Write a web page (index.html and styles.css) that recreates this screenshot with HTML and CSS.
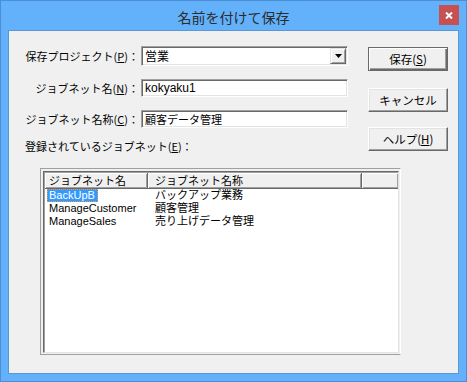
FILE: index.html
```html
<!DOCTYPE html>
<html>
<head>
    <meta charset="utf-8" />
    <title>名前を付けて保存</title>
    <link rel="stylesheet" href="styles.css">
</head>
<body>
    <div class="window">
        <!-- タイトルバー -->
        <div class="titlebar">
            <span class="title">名前を付けて保存</span>
            <div class="close">
                <svg width="8" height="7" viewBox="0 0 8 7"><path d="M1 0.5 L7 6.5 M7 0.5 L1 6.5" stroke="#fff" stroke-width="2"/></svg>
            </div>
        </div>
        <div class="client">
            <div class="top">
                <!-- 入力欄 -->
                <div class="form">
                    <div class="row r1">
                        <label>保存プロジェクト(<u>P</u>)：</label>
                        <div class="combo">
                            <span class="val">営業</span>
                            <span class="drop"><svg width="7" height="4" viewBox="0 0 7 4"><path d="M0 0 H7 L3.5 4 Z" fill="#000"/></svg></span>
                        </div>
                    </div>
                    <div class="row r2">
                        <label>ジョブネット名(<u>N</u>)：</label>
                        <div class="field"><span class="en">kokyaku1</span></div>
                    </div>
                    <div class="row r3">
                        <label>ジョブネット名称(<u>C</u>)：</label>
                        <div class="field">顧客データ管理</div>
                    </div>
                    <div class="row r4">
                        <label class="plain">登録されているジョブネット(<u>E</u>)：</label>
                    </div>
                </div>
                <!-- ボタン -->
                <div class="buttons">
                    <div class="btn default">保存(<u>S</u>)</div>
                    <div class="btn b2">キャンセル</div>
                    <div class="btn b3">ヘルプ(<u>H</u>)</div>
                </div>
            </div>
            <!-- 一覧 -->
            <div class="listframe">
                <div class="listview">
                    <div class="header">
                        <div class="hcell c1">ジョブネット名</div>
                        <div class="hcell c2">ジョブネット名称</div>
                        <div class="hcell c3"></div>
                    </div>
                    <div class="lrow">
                        <div class="cell c1"><span class="sel">BackUpB</span></div>
                        <div class="cell c2">バックアップ業務</div>
                    </div>
                    <div class="lrow">
                        <div class="cell c1"><span class="txt">ManageCustomer</span></div>
                        <div class="cell c2">顧客管理</div>
                    </div>
                    <div class="lrow">
                        <div class="cell c1"><span class="txt">ManageSales</span></div>
                        <div class="cell c2">売り上げデータ管理</div>
                    </div>
                </div>
            </div>
        </div>
    </div>
</body>
</html>
```

FILE: styles.css
```css
/*清除边距*/
body{
    margin: 0;
    font-family: "Noto Sans CJK JP", sans-serif;
    font-size: 11px;
    color: #000;
}
/*ウィンドウ枠*/
.window{
    width: 467px;
    height: 382px;
    box-sizing: border-box;
    border: 1px solid #4c8fd6;
    background: #63b1fb;
    padding: 0 7px 7px;
    display: flex;
    flex-direction: column;
}
.titlebar{
    height: 29px;
    position: relative;
    display: flex;
    justify-content: center;
    align-items: center;
}
.title{
    font-size: 14px;
    color: #2b2b2b;
    line-height: 16px;
    padding-top: 2px;
}
.close{
    position: absolute;    /*タイトルバーの右上*/
    right: 0;
    top: 4px;
    width: 20px;
    height: 20px;
    background: #c75050;
    display: flex;
    justify-content: center;
    align-items: center;
}
.client{
    flex: 1;
    border: 1px solid #5a97d3;
    background: #f0f0f0;
    padding-top: 15px;
}
.top{
    display: flex;
}
/*入力欄*/
.row{
    display: flex;
    align-items: center;
}
.row label{
    width: 130px;
    text-align: right;
    line-height: 14px;
    margin-right: 2px;
}
.row label.plain{
    width: auto;
    text-align: left;
    padding-left: 16px;
}
.row u{
    text-decoration-thickness: 1px;
    text-underline-offset: 1px;
}
.r1{ height: 20px; }
.r2{ height: 18px; margin-top: 13px; }
.r3{ height: 18px; margin-top: 13px; }
.r4{ height: 14px; margin-top: 11px; }
.combo, .field{
    width: 207px;
    height: 100%;
    box-sizing: border-box;
    background: #fff;
    border: 1px solid;
    border-color: #a0a0a0 #fff #fff #a0a0a0;
    box-shadow: inset 1px 1px #696969, inset -1px -1px #e3e3e3;
    display: flex;
    align-items: center;
    padding-left: 3px;
    line-height: 14px;
}
.en{
    font-family: "Liberation Sans", "Noto Sans CJK JP", sans-serif;
    font-size: 12px;
}
.combo .val{
    flex: 1;
    font-size: 12px;
}
.drop{
    width: 16px;
    height: 16px;
    box-sizing: border-box;
    margin-right: 1px;
    background: #f0f0f0;
    border: 1px solid;
    border-color: #e3e3e3 #696969 #696969 #e3e3e3;
    box-shadow: inset 1px 1px #fff, inset -1px -1px #a0a0a0;
    display: flex;
    justify-content: center;
    align-items: center;
}
/*ボタン*/
.buttons{
    margin-left: 20px;
    padding-top: 1px;
}
.btn{
    width: 80px;
    height: 24px;
    box-sizing: border-box;
    background: #f0f0f0;
    border: 1px solid;
    border-color: #fff #696969 #696969 #fff;
    box-shadow: inset -1px -1px #a0a0a0, inset 1px 1px #e3e3e3;
    display: flex;
    justify-content: center;
    align-items: center;
    font-size: 11.5px;
    line-height: 14px;
}
.btn.default{
    border-color: #696969;
    box-shadow: inset 1px 1px #fff, inset -1px -1px #696969, inset -2px -2px #a0a0a0;
}
.b2{ margin-top: 17px; }
.b3{ margin-top: 15px; }
/*一覧*/
.listframe{
    margin: 15px 0 0 31px;
    width: 361px;
    height: 187px;
    box-sizing: border-box;
    border: 1px solid;
    border-color: #a0a0a0 #fff #a0a0a0 #a0a0a0;
    padding: 2px 1px 1px 2px;
}
.listview{
    height: 100%;
    box-sizing: border-box;
    background: #fff;
    border: 1px solid;
    border-color: #696969 #e3e3e3 #e3e3e3 #696969;
    box-shadow: inset 1px 1px #a0a0a0;
    padding: 1px 0 0 1px;
}
.header{
    display: flex;
    height: 16px;
}
.hcell{
    height: 16px;
    box-sizing: border-box;
    background: #f0f0f0;
    border-right: 1px solid #696969;
    border-bottom: 1px solid #696969;
    box-shadow: inset 1px 1px #fff, inset -1px -1px #a0a0a0;
    line-height: 15px;
}
.c1{ width: 103px; padding-left: 4px; box-sizing: border-box; }
.c2{ width: 214px; padding-left: 7px; box-sizing: border-box; }
.c3{ flex: 1; }
.hcell.c3{ border-right: none; }
.lrow{
    display: flex;
    height: 13px;
    line-height: 13px;
    font-family: "Liberation Sans", "Noto Sans CJK JP", sans-serif;
    font-size: 11px;
}
.cell{
    white-space: nowrap;
}
.cell.c1{
    padding-left: 2px;
}
.txt{
    padding-left: 2px;
}
.sel{
    display: inline-block;
    height: 13px;
    box-sizing: border-box;
    padding: 0 3px 0 2px;
    background: #3399ff;
    color: #fff;
    outline: 1px dotted #f09a3a;
    outline-offset: -1px;
}
```
